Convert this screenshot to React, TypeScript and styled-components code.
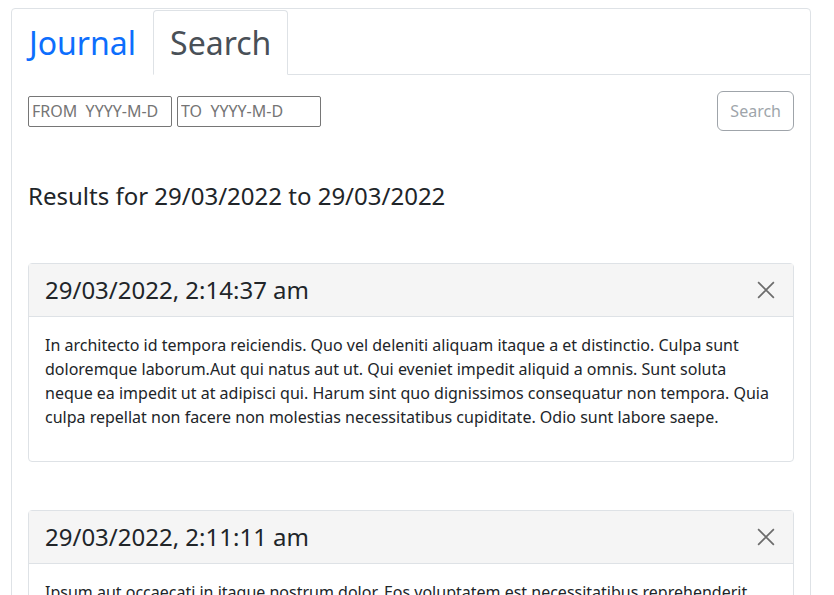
import React from "react";
import styled, { createGlobalStyle } from "styled-components";

const entries = [
  {
    stamp: "29/03/2022, 2:14:37 am",
    text: "In architecto id tempora reiciendis. Quo vel deleniti aliquam itaque a et distinctio. Culpa sunt doloremque laborum.Aut qui natus aut ut. Qui eveniet impedit aliquid a omnis. Sunt soluta neque ea impedit ut at adipisci qui. Harum sint quo dignissimos consequatur non tempora. Quia culpa repellat non facere non molestias necessitatibus cupiditate. Odio sunt labore saepe.",
  },
  {
    stamp: "29/03/2022, 2:11:11 am",
    text: "Ipsum aut occaecati in itaque nostrum dolor. Eos voluptatem est necessitatibus reprehenderit voluptas. Et ut quia similique veniam. Nihil dolores ut repellendus praesentium consequatur. Sed rerum dolorem ut nisi corporis.",
  },
];

const GlobalStyle = createGlobalStyle`
  body {
    margin: 0;
    background: #fff;
    font-family: "Noto Sans", "Open Sans", sans-serif;
    color: #212529;
  }
`;

export default function App() {
  return (
    <>
      <GlobalStyle />
      <Page>
        <Frame>
          <TabNav>
            <Tab>Journal</Tab>
            <Tab active>Search</Tab>
          </TabNav>
          <Panel>
            <SearchRow>
              <Inputs>
                <DateInput placeholder="FROM  YYYY-M-D" />
                <DateInput placeholder="TO  YYYY-M-D" />
              </Inputs>
              <SearchButton disabled>Search</SearchButton>
            </SearchRow>
            <ResultsHeading>Results for 29/03/2022 to 29/03/2022</ResultsHeading>
            {entries.map((e, i) => (
              <EntryCard key={i}>
                <EntryHeader>
                  <EntryTitle>{e.stamp}</EntryTitle>
                  <CloseButton aria-label="Close">
                    <svg width="18" height="18" viewBox="0 0 16 16">
                      <path
                        d="M1 1 L15 15 M15 1 L1 15"
                        stroke="currentColor"
                        strokeWidth="1.5"
                        fill="none"
                      />
                    </svg>
                  </CloseButton>
                </EntryHeader>
                <EntryBody>
                  <p>{e.text}</p>
                </EntryBody>
              </EntryCard>
            ))}
          </Panel>
        </Frame>
      </Page>
    </>
  );
}

// Styled Components

const Page = styled.div`
  padding: 8px 23px 0 11px;
`;

const Frame = styled.div`
  border: 1px solid #dee2e6;
  border-radius: 4px;
  min-height: 700px;
`;

const TabNav = styled.div`
  display: flex;
  padding-top: 1px;
  border-bottom: 1px solid #dee2e6;
`;

const Tab = styled.div<{ active?: boolean }>`
  padding: 8px 16px;
  font-size: 32px;
  line-height: 47px;
  margin-bottom: -1px;
  border: 1px solid ${(p) => (p.active ? "#dee2e6" : "transparent")};
  border-bottom-color: ${(p) => (p.active ? "#fff" : "transparent")};
  border-radius: 4px 4px 0 0;
  background: #fff;
  color: ${(p) => (p.active ? "#495057" : "#0d6efd")};
  cursor: pointer;
`;

const Panel = styled.div`
  padding: 16px 16px 0;
`;

const SearchRow = styled.div`
  display: flex;
  align-items: center;
  justify-content: space-between;
`;

const Inputs = styled.div`
  display: flex;
  gap: 5px;
`;

const DateInput = styled.input`
  width: 144px;
  height: 31px;
  box-sizing: border-box;
  border: 1px solid #767676;
  border-radius: 2px;
  padding: 1px 3px;
  font-family: "Noto Sans", sans-serif;
  font-size: 16px;
  &::placeholder {
    color: #757575;
  }
`;

const SearchButton = styled.button`
  height: 40px;
  padding: 6px 12px;
  font-family: "Noto Sans", sans-serif;
  font-size: 16px;
  color: #6c757d;
  background: transparent;
  border: 1px solid #6c757d;
  border-radius: 6px;
  &:disabled {
    opacity: 0.65;
  }
`;

const ResultsHeading = styled.h4`
  margin: 51px 0 52px;
  font-size: 24px;
  font-weight: 400;
  line-height: 1.2;
`;

const EntryCard = styled.div`
  border: 1px solid #dee2e6;
  border-radius: 4px;
  margin-bottom: 48px;
  background: #fff;
`;

const EntryHeader = styled.div`
  display: flex;
  align-items: center;
  justify-content: space-between;
  padding: 8px 16px;
  background: #f5f5f5;
  border-bottom: 1px solid #dee2e6;
`;

const EntryTitle = styled.div`
  font-size: 24px;
  line-height: 36px;
`;

const CloseButton = styled.button`
  display: flex;
  align-items: center;
  justify-content: center;
  border: 0;
  background: transparent;
  color: #6c6c6c;
  padding: 4px 2px;
  cursor: pointer;
`;

const EntryBody = styled.div`
  padding: 16px;
  p {
    margin: 0 0 16px;
    font-size: 16px;
    line-height: 24px;
  }
`;
